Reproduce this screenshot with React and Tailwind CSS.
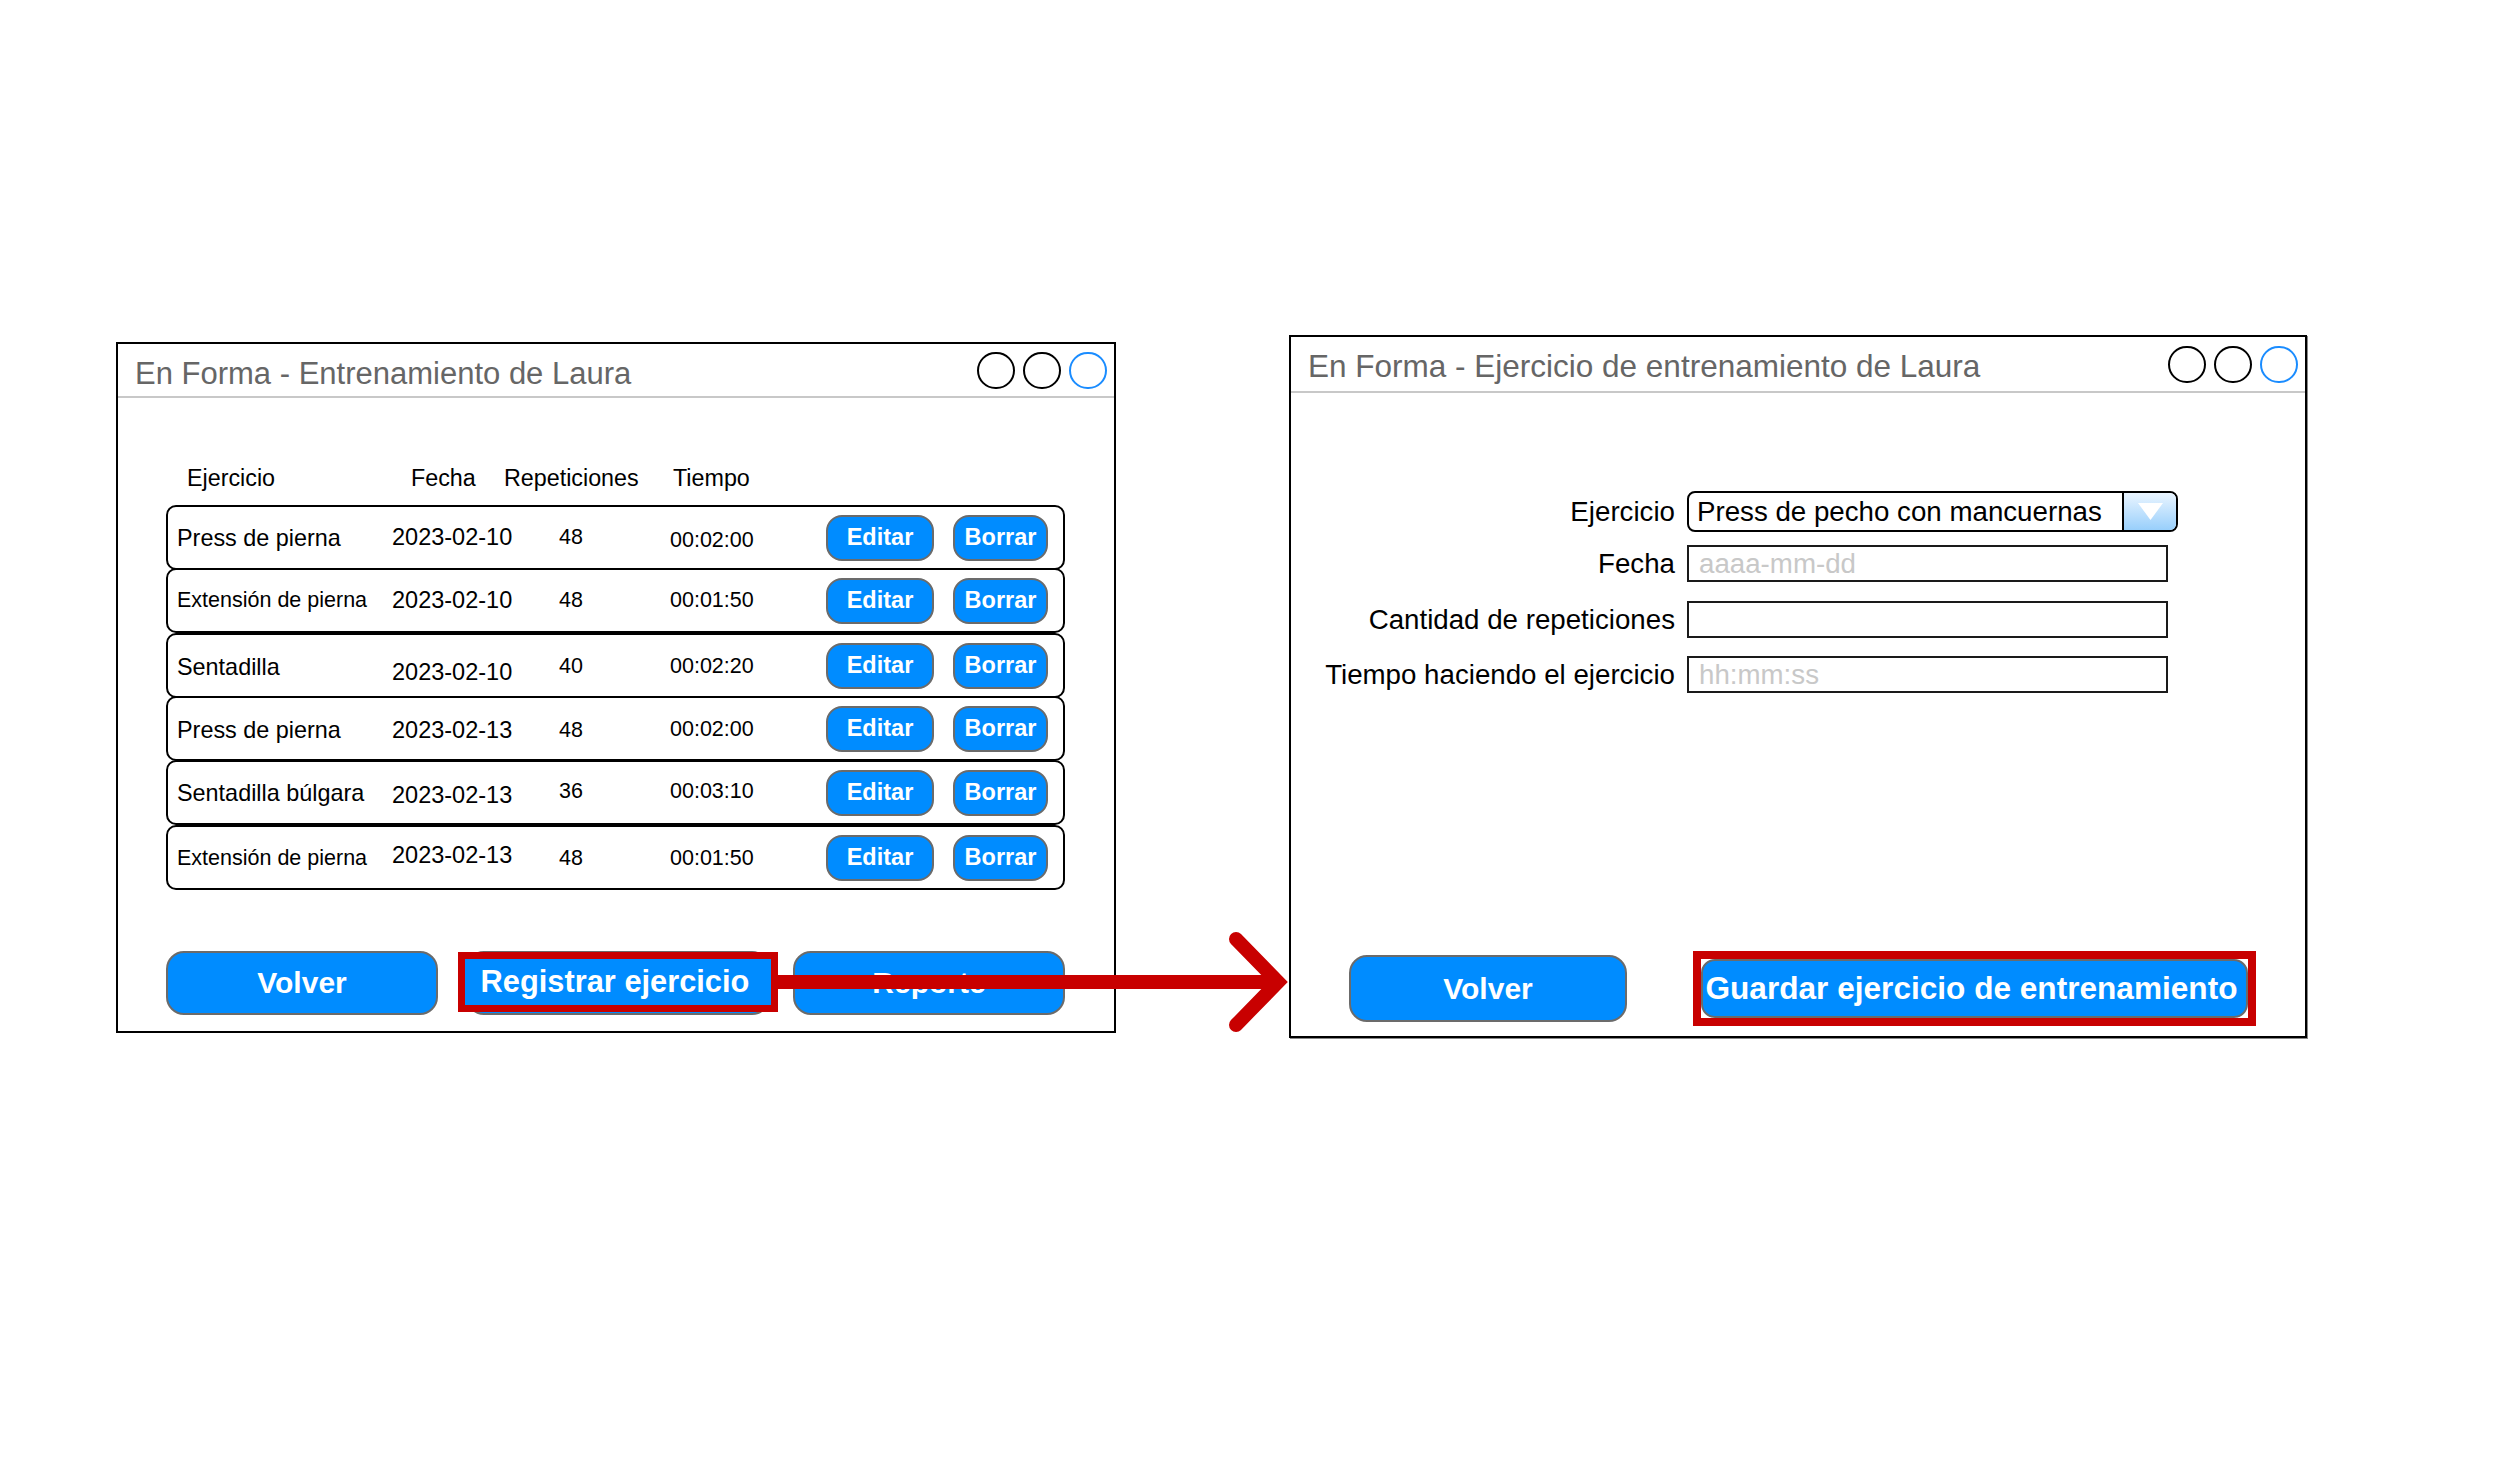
import React from "react";

const rows = [
  { name: "Press de pierna", date: "2023-02-10", reps: "48", time: "00:02:00", small: false, mt: "", o: ["translate-y-[1px]", "", "", "translate-y-[3px]"] },
  { name: "Extensión de pierna", date: "2023-02-10", reps: "48", time: "00:01:50", small: true, mt: "-mt-[2px]", o: ["", "", "", ""] },
  { name: "Sentadilla", date: "2023-02-10", reps: "40", time: "00:02:20", small: false, mt: "", o: ["translate-y-[2px]", "translate-y-[7px]", "translate-y-[1px]", "translate-y-[1px]"] },
  { name: "Press de pierna", date: "2023-02-13", reps: "48", time: "00:02:00", small: false, mt: "-mt-[2px]", o: ["translate-y-[2px]", "translate-y-[2px]", "translate-y-[2px]", "translate-y-[1px]"] },
  { name: "Sentadilla búlgara", date: "2023-02-13", reps: "36", time: "00:03:10", small: false, mt: "-mt-[1px]", o: ["translate-y-[1px]", "translate-y-[3px]", "-translate-y-[1px]", "-translate-y-[1px]"] },
  { name: "Extensión de pierna", date: "2023-02-13", reps: "48", time: "00:01:50", small: true, mt: "", o: ["translate-y-[1px]", "-translate-y-[2px]", "translate-y-[1px]", "translate-y-[1px]"] },
];

function Circles() {
  return (
    <div className="flex items-center gap-[8px]">
      <div className="w-[38px] h-[37px] rounded-full border-2 border-black" />
      <div className="w-[38px] h-[37px] rounded-full border-2 border-black" />
      <div className="w-[38px] h-[37px] rounded-full border-2 border-[#1a8cff]" />
    </div>
  );
}

function SmallBtn({ children, w }) {
  return (
    <div className={`${w} h-[46px] flex-none rounded-[16px] bg-[#008cff] border-2 border-[#6b6b6b] flex items-center justify-center text-white font-bold text-[23.5px] leading-none`}>
      {children}
    </div>
  );
}

function LeftWindow() {
  return (
    <div className="mt-[7px] w-[1000px] h-[691px] border-2 border-black bg-white flex flex-col flex-none">
      <div className="h-[54px] border-b-2 border-[#c8c8c8] flex items-center justify-between pl-[17px] pr-[7px]">
        <span className="text-[31px] leading-none text-[#666666] translate-y-[3px]">En Forma - Entrenamiento de Laura</span>
        <Circles />
      </div>
      <div className="mt-[68px] pl-[69px] flex items-center h-[26px] text-[23.3px] leading-none text-black">
        <span className="w-[224px] flex-none">Ejercicio</span>
        <span className="w-[93px] flex-none">Fecha</span>
        <span className="w-[169px] flex-none">Repeticiones</span>
        <span className="flex-none">Tiempo</span>
      </div>
      <div className="mt-[13px] ml-[48px] w-[899px] flex flex-col">
        {rows.map((r, i) => (
          <div key={i} className={`${r.mt} h-[65px] border-2 border-black rounded-[10px] flex items-center pl-[9px] bg-white text-black leading-none`}>
            <span className={`w-[215px] flex-none whitespace-nowrap ${r.small ? "text-[21.5px]" : "text-[23.4px]"} ${r.o[0]}`}>{r.name}</span>
            <span className={`w-[167px] flex-none text-[23.5px] ${r.o[1]}`}>{r.date}</span>
            <span className={`w-[111px] flex-none text-[21.5px] ${r.o[2]}`}>{r.reps}</span>
            <span className={`w-[156px] flex-none text-[21.5px] ${r.o[3]}`}>{r.time}</span>
            <SmallBtn w="w-[108px]">Editar</SmallBtn>
            <div className="w-[19px] flex-none" />
            <SmallBtn w="w-[95px]">Borrar</SmallBtn>
          </div>
        ))}
      </div>
      <div className="mt-[61px] ml-[48px] flex items-start">
        <div className="w-[272px] h-[64px] rounded-[18px] bg-[#008cff] border-2 border-[#6b6b6b] flex items-center justify-center text-white font-bold text-[30px] leading-none">
          Volver
        </div>
        <div className="relative ml-[28px] w-[304px] h-[64px] rounded-[18px] bg-[#008cff] border-2 border-[#6b6b6b]">
          <div className="absolute left-[-10px] top-[-1px] w-[320px] h-[60px] border-[7px] border-[#c80000] bg-[#008cff] flex items-center justify-center pr-[6px] text-white font-bold text-[30.8px] leading-none whitespace-nowrap">
            Registrar ejercicio
          </div>
        </div>
        <div className="ml-[23px] w-[272px] h-[64px] rounded-[18px] bg-[#008cff] border-2 border-[#6b6b6b] flex items-center justify-center text-white font-bold text-[30px] leading-none">
          Reporte
        </div>
      </div>
    </div>
  );
}

function FormRow({ label, children, mt }) {
  return (
    <div className={`${mt} flex items-center`}>
      <span className="w-[384px] flex-none text-right text-[27.7px] leading-none text-black whitespace-nowrap">{label}</span>
      <div className="ml-[12px] flex-none">{children}</div>
    </div>
  );
}

function TextBox({ placeholder }) {
  return (
    <div className="w-[481px] h-[37px] border-2 border-[#1a1a1a] flex items-center pl-[10px] text-[27.7px] leading-none text-[#c8c8c8] bg-white">
      {placeholder}
    </div>
  );
}

function RightWindow() {
  return (
    <div className="w-[1018px] h-[703px] border-2 border-black bg-white flex flex-col flex-none shadow-[1px_1px_0_#888]">
      <div className="h-[56px] border-b-2 border-[#c8c8c8] flex items-center justify-between pl-[17px] pr-[7px]">
        <span className="text-[31.5px] leading-none text-[#666666] translate-y-[3px]">En Forma - Ejercicio de entrenamiento de Laura</span>
        <Circles />
      </div>
      <div className="mt-[98px] flex flex-col">
        <FormRow label="Ejercicio" mt="">
          <div className="w-[491px] h-[41px] border-2 border-black rounded-[8px] flex overflow-hidden bg-white">
            <div className="flex-1 flex items-center pl-[8px] text-[27.7px] leading-none text-black whitespace-nowrap">Press de pecho con mancuernas</div>
            <div className="w-[54px] flex-none border-l-2 border-black bg-linear-to-b from-[#eaf5ff] to-[#98cffb] flex items-center justify-center">
              <svg width="25" height="17" viewBox="0 0 25 17">
                <polygon points="0,0 25,0 12.5,17" fill="#ffffff" />
              </svg>
            </div>
          </div>
        </FormRow>
        <FormRow label="Fecha" mt="mt-[13px]">
          <TextBox placeholder="aaaa-mm-dd" />
        </FormRow>
        <FormRow label="Cantidad de repeticiones" mt="mt-[19px]">
          <TextBox placeholder="" />
        </FormRow>
        <FormRow label="Tiempo haciendo el ejercicio" mt="mt-[18px]">
          <TextBox placeholder="hh:mm:ss" />
        </FormRow>
      </div>
      <div className="mt-auto pb-[10px] pl-[58px] flex items-center">
        <div className="w-[278px] h-[67px] rounded-[18px] bg-[#008cff] border-2 border-[#6b6b6b] flex items-center justify-center text-white font-bold text-[30px] leading-none">
          Volver
        </div>
        <div className="ml-[66px] w-[563px] h-[75px] border-[8px] border-[#c80000] bg-white">
          <div className="w-full h-full rounded-[14px] bg-[#008cff] border-2 border-[#6b6b6b] flex items-center justify-center pr-[6px] text-white font-bold text-[31.6px] leading-none whitespace-nowrap">
            Guardar ejercicio de entrenamiento
          </div>
        </div>
      </div>
    </div>
  );
}

export default function App() {
  return (
    <div className="relative w-[2496px] h-[1478px] bg-white overflow-hidden font-['Liberation_Sans',Arial,sans-serif]">
      <div className="flex items-start pl-[116px] pt-[335px] gap-[173px]">
        <LeftWindow />
        <RightWindow />
      </div>
      <svg className="absolute left-[770px] top-[920px]" width="540" height="125" viewBox="0 0 540 125">
        <line x1="8" y1="62" x2="505" y2="62" stroke="#c80000" strokeWidth="14" />
        <polyline points="466,19 508,62 466,105" fill="none" stroke="#c80000" strokeWidth="14" strokeLinecap="round" strokeLinejoin="miter" />
      </svg>
    </div>
  );
}
